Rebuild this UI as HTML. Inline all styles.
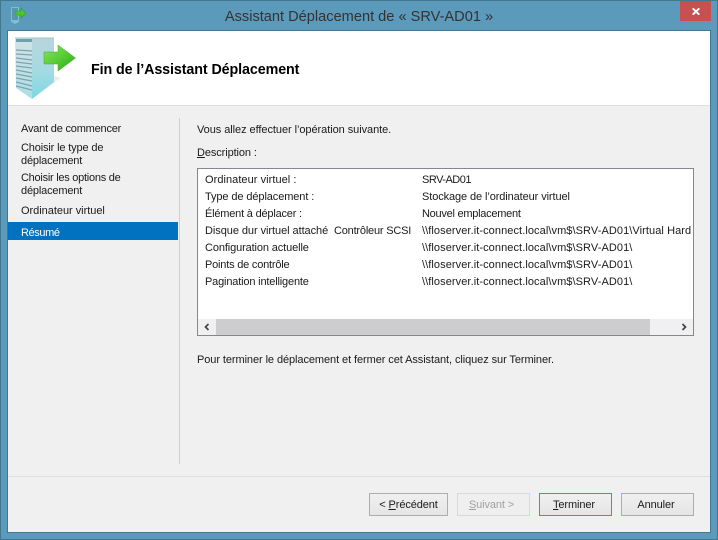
<!DOCTYPE html>
<html lang="fr"><head><meta charset="utf-8"><title>Assistant Déplacement</title>
<style>
html,body{margin:0;padding:0;background:#5b9aba}
#w{position:relative;width:718px;height:540px;overflow:hidden;background:#5b9aba;font-family:"Liberation Sans",sans-serif;font-size:11px;color:#1a1a1a}
#w div,#w span.t{position:absolute;white-space:nowrap}
.t{line-height:14px;letter-spacing:-.1px}
u{text-decoration:underline}
.btn{box-sizing:border-box;width:79px;height:23px;top:493px;border:1px solid #adadad;background:linear-gradient(#f0f0f0,#e5e5e5);text-align:center;line-height:23px;letter-spacing:-.1px}
</style></head><body><div id="w">
<div style="left:0;top:0;width:718px;height:1px;background:#41778f"></div>
<div style="left:0;top:0;width:1px;height:540px;background:#41778f"></div>
<div style="left:717px;top:0;width:1px;height:540px;background:#41778f"></div>
<div style="left:0;top:539px;width:718px;height:1px;background:#41778f"></div>
<svg style="position:absolute;left:10px;top:6px" width="17" height="18" viewBox="0 0 17 18"><path d="M1 1h8v15l-4 2-4-2z" fill="#7cc0cf"/><path d="M2 3h6M2 5h6M2 7h6M2 9h6M2 11h6M2 13h6" stroke="#2f6f85"/><path d="M6 5h5V2l5 5-5 5V9H6z" fill="#4fc43a" stroke="#2c9e26" stroke-width=".6"/></svg>
<div style="left:0;top:4px;width:718px;text-align:center;font-size:14.6px;line-height:26px;color:#333">Assistant Déplacement de « SRV-AD01 »</div>
<div style="left:680px;top:1px;width:31px;height:20px;background:#c75050"></div>
<svg style="position:absolute;left:692px;top:8px" width="8" height="7" viewBox="0 0 8 7"><path d="M.7 .3L7.3 6.7M7.3 .3L.7 6.7" stroke="#fff" stroke-width="1.9"/></svg>

<div style="left:7px;top:30px;width:704px;height:503px;background:#41778f"></div>
<div style="left:8px;top:31px;width:702px;height:501px;background:#f0f0f0"></div>
<div style="left:8px;top:31px;width:702px;height:74px;background:#fff"></div>
<div style="left:8px;top:105px;width:702px;height:1px;background:#dfdfdf"></div>
<svg style="position:absolute;left:14px;top:36px" width="64" height="66" viewBox="0 0 64 66">
<defs><linearGradient id="a" x1="0" x2="0" y1="0" y2="1"><stop offset="0" stop-color="#b9d5da"/><stop offset=".55" stop-color="#a3dbe2"/><stop offset="1" stop-color="#7fd6e2"/></linearGradient>
<linearGradient id="f" x1="0" x2="0" y1="0" y2="1"><stop offset="0" stop-color="#d3e3e6"/><stop offset="1" stop-color="#abdfe6"/></linearGradient>
<linearGradient id="g" x1="0" x2="1" y1="0" y2="1"><stop offset="0" stop-color="#8fdf60"/><stop offset=".5" stop-color="#58cd35"/><stop offset="1" stop-color="#2ea31f"/></linearGradient></defs>
<path d="M18 63L40 47 47 42 40 40z" fill="#e8efef"/>
<path d="M18 2H40V46L18 63z" fill="url(#a)"/>
<path d="M1 2H18V63L2 52z" fill="url(#f)"/>
<path d="M1 1.5H40V2.5H1z" fill="#9cc8d2"/>
<path d="M2 3H18V6H2z" fill="#6da3b1"/>
<path d="M2 14L18 15M2 18L18 19M2 22L18 24M2 26L18 28M2 30L18 32M2 34L18 37M2 38L18 41M2 42L18 45M2 46L18 50M2 50L18 54" stroke="#7fa3ad" stroke-width="1.3"/>
<path d="M30 16H44V9L61.5 22 44 35V28H30z" fill="url(#g)" stroke="#3fae2a" stroke-width=".5"/>
</svg>
<div style="left:91px;top:61px;font-size:14.3px;font-weight:bold;line-height:18px;color:#000;letter-spacing:-.1px">Fin de l’Assistant Déplacement</div>

<span class="t" style="left:21px;top:122px;letter-spacing:-.2px">Avant de commencer</span>
<span class="t" style="left:21px;top:141px;letter-spacing:-.15px">Choisir le type de</span>
<span class="t" style="left:21px;top:154px;letter-spacing:-.17px">déplacement</span>
<span class="t" style="left:21px;top:171px;letter-spacing:-.26px">Choisir les options de</span>
<span class="t" style="left:21px;top:184px;letter-spacing:-.17px">déplacement</span>
<span class="t" style="left:21px;top:204px;letter-spacing:-.03px">Ordinateur virtuel</span>
<div style="left:8px;top:222px;width:170px;height:18px;background:#0072c0"></div>
<span class="t" style="left:21px;top:226px;color:#fff;letter-spacing:-.4px">Résumé</span>
<div style="left:179px;top:118px;width:1px;height:346px;background:#cfcfcf"></div>

<span class="t" style="left:197px;top:123px;letter-spacing:-.06px">Vous allez effectuer l’opération suivante.</span>
<span class="t" style="left:197px;top:146px"><u>D</u>escription :</span>

<div style="left:197px;top:168px;width:497px;height:168px;box-sizing:border-box;border:1px solid #828790;background:#fff;overflow:hidden">
<span class="t" style="left:7px;top:4px;letter-spacing:.05px">Ordinateur virtuel :</span><span class="t" style="left:224px;top:4px;letter-spacing:-.5px">SRV-AD01</span>
<span class="t" style="left:7px;top:21px">Type de déplacement :</span><span class="t" style="left:224px;top:21px">Stockage de l’ordinateur virtuel</span>
<span class="t" style="left:7px;top:38px;letter-spacing:-.2px">Élément à déplacer :</span><span class="t" style="left:224px;top:38px;letter-spacing:-.26px">Nouvel emplacement</span>
<span class="t" style="left:7px;top:55px;letter-spacing:-.06px">Disque dur virtuel attaché</span><span class="t" style="left:136px;top:55px;letter-spacing:-.2px">Contrôleur SCSI</span><span class="t" style="left:224px;top:55px;letter-spacing:.08px">\\floserver.it-connect.local\vm$\SRV-AD01\Virtual Hard Disks</span>
<span class="t" style="left:7px;top:72px;letter-spacing:-.12px">Configuration actuelle</span><span class="t" style="left:224px;top:72px;letter-spacing:.08px">\\floserver.it-connect.local\vm$\SRV-AD01\</span>
<span class="t" style="left:7px;top:89px;letter-spacing:-.2px">Points de contrôle</span><span class="t" style="left:224px;top:89px;letter-spacing:.08px">\\floserver.it-connect.local\vm$\SRV-AD01\</span>
<span class="t" style="left:7px;top:106px;letter-spacing:-.17px">Pagination intelligente</span><span class="t" style="left:224px;top:106px;letter-spacing:.08px">\\floserver.it-connect.local\vm$\SRV-AD01\</span>
<div style="left:0;top:150px;width:495px;height:16px;background:#f0f0f0"></div>
<div style="left:18px;top:150px;width:434px;height:16px;background:#cdcdcd"></div>
<svg style="position:absolute;left:5px;top:154px" width="8" height="8" viewBox="0 0 8 8"><path d="M5.5 1L2.5 4l3 3" fill="none" stroke="#444" stroke-width="1.7"/></svg>
<svg style="position:absolute;left:482px;top:154px" width="8" height="8" viewBox="0 0 8 8"><path d="M2.5 1L5.5 4l-3 3" fill="none" stroke="#444" stroke-width="1.7"/></svg>
</div>

<span class="t" style="left:197px;top:353px;letter-spacing:-.08px">Pour terminer le déplacement et fermer cet Assistant, cliquez sur Terminer.</span>

<div style="left:8px;top:476px;width:702px;height:1px;background:#dfdfdf"></div>
<div class="btn" style="left:369px">&lt; <u>P</u>récédent</div>
<div class="btn" style="left:457px;width:73px;padding-right:4px;border-color:#d9d9d9;background:#efefef;color:#a0a0a0"><u>S</u>uivant &gt;</div>
<div class="btn" style="left:539px;width:73px;padding-right:3px;border-color:#3c8ee8"><u>T</u>erminer</div>
<div class="btn" style="left:621px;width:73px;padding-right:3px">Annuler</div>
</div></body></html>
